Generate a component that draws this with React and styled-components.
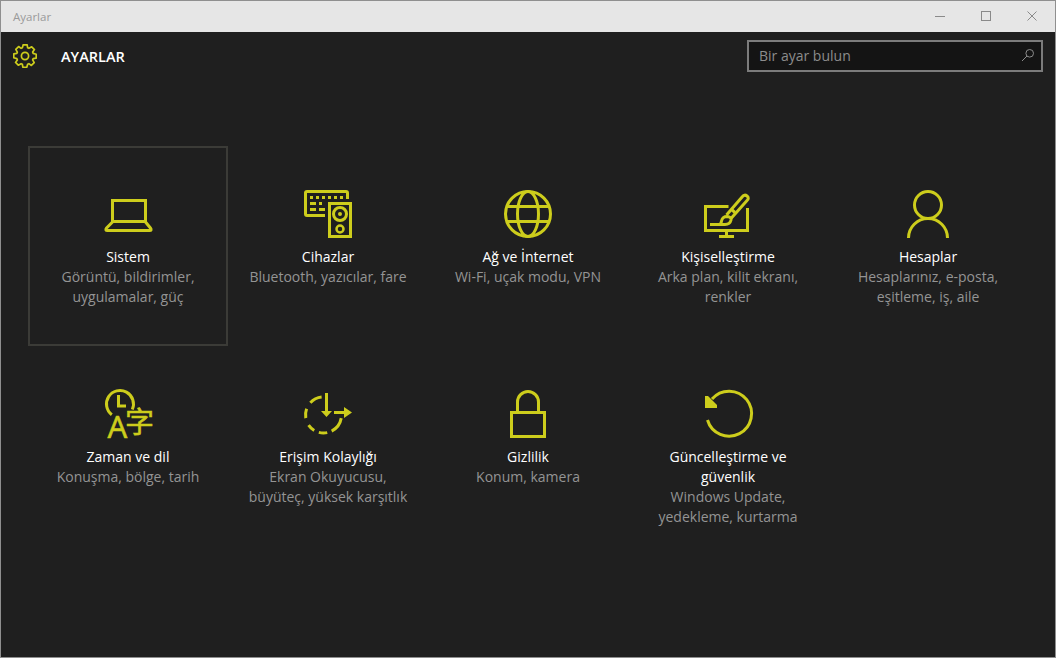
import React from 'react';
import styled, { createGlobalStyle } from 'styled-components';

const ACCENT = '#cdcd1c';
const FONT = '"Open Sans", "Noto Sans", sans-serif';

const GlobalStyle = createGlobalStyle`
  html, body {
    margin: 0;
    padding: 0;
    background: #1f1f1f;
  }
  * {
    box-sizing: border-box;
  }
`;

const Window = styled.div`
  width: 1056px;
  height: 658px;
  border: 1px solid #8f8f8f;
  background: #1f1f1f;
  font-family: ${FONT};
  overflow: hidden;
`;

const TitleBar = styled.div`
  height: 31px;
  background: #e6e6e6;
  display: flex;
  align-items: center;
  justify-content: space-between;
  padding-left: 12px;
`;

const TitleText = styled.span`
  font-size: 11.5px;
  color: #9a9a9a;
`;

const WindowButtons = styled.div`
  display: flex;
`;

const WindowButton = styled.div`
  width: 46px;
  height: 31px;
  display: flex;
  align-items: center;
  justify-content: center;
  padding-bottom: 1px;
`;

const Header = styled.header`
  height: 48px;
  display: flex;
  align-items: center;
  padding: 0 12px 0 12px;
`;

const HeaderTitle = styled.h1`
  margin: 0 auto 0 24px;
  font-size: 14.5px;
  font-weight: 600;
  color: #fff;
`;

const SearchBox = styled.div`
  width: 296px;
  height: 32px;
  border: 2px solid #7c7c7c;
  background: #141414;
  display: flex;
  align-items: center;
  justify-content: space-between;
  padding: 0 6px 2px 10px;
`;

const SearchText = styled.span`
  font-size: 14px;
  color: #8c8c8c;
`;

const Grid = styled.main`
  display: grid;
  grid-template-columns: repeat(5, 200px);
  grid-auto-rows: 200px;
  padding: 66px 0 0 27px;
`;

const Tile = styled.div`
  border: 2px solid ${(props) => (props.$selected ? '#3b3b37' : 'transparent')};
  padding: 42px 8px 0;
  display: flex;
  flex-direction: column;
  align-items: center;
  text-align: center;
`;

const IconBox = styled.svg`
  width: 48px;
  height: 48px;
  margin-bottom: 9px;
  fill: none;
  stroke: ${ACCENT};
  stroke-width: 3;
  flex: none;
  overflow: visible;
`;

const TileName = styled.div`
  font-size: 14px;
  line-height: 20px;
  color: #fff;
`;

const TileDesc = styled.div`
  font-size: 14px;
  line-height: 20px;
  color: #949494;
`;

const Keys = styled.path`
  stroke: none;
  fill: ${ACCENT};
`;

const gearPath = () => {
  const teeth = 8;
  const points = [];
  for (let i = 0; i < teeth; i++) {
    const a = (i / teeth) * Math.PI * 2 - Math.PI / 2;
    const step = (Math.PI * 2) / teeth;
    [
      [-0.5, 8.6],
      [-0.3, 11.4],
      [0.14, 11.4],
      [0.3, 8.6],
    ].forEach(([off, r]) => {
      const t = a + off * step + 0.08;
      points.push(`${(12 + r * Math.cos(t)).toFixed(2)} ${(12 + r * Math.sin(t)).toFixed(2)}`);
    });
  }
  return `M${points.join('L')}Z`;
};

const arc = (from, to) => {
  const point = (deg) => {
    const t = (deg * Math.PI) / 180;
    return `${(19.5 + 18 * Math.cos(t)).toFixed(2)} ${(25 + 18 * Math.sin(t)).toFixed(2)}`;
  };
  return `M${point(from)}A18 18 0 0 ${to > from ? 1 : 0} ${point(to)}`;
};

const GearIcon = () => (
  <svg width="24" height="24" viewBox="0 0 24 24" fill="none" stroke={ACCENT} strokeWidth="1.7">
    <path d={gearPath()} strokeLinejoin="round" />
    <circle cx="12" cy="12" r="3.6" />
  </svg>
);

const LaptopIcon = () => (
  <IconBox viewBox="0 0 48 48">
    <rect x="8.5" y="10.5" width="33" height="21" />
    <path d="M8.5 32 L2.6 38 Q0.8 40.5 3.5 40.5 H45.5 Q48.2 40.5 46.4 38 L41.5 32" />
  </IconBox>
);

const DevicesIcon = () => (
  <IconBox viewBox="0 0 48 48">
    <path d="M21 25.5 H3 Q1.5 25.5 1.5 24 V3 Q1.5 1.5 3 1.5 H42 Q43.5 1.5 43.5 3 V9" />
    <Keys d="M6 6h3v3H6zM12 6h3v3h-3zM18 6h3v3h-3zM24 6h3v3h-3zM30 6h3v3h-3zM36 6h3v3h-3zM6 12h6v3H6zM15 12h3v3h-3zM6 18h6v3H6zM15 18h6v3h-6z" />
    <rect x="25.5" y="13.5" width="21" height="33" />
    <circle cx="36" cy="24" r="6.5" />
    <circle cx="36" cy="24" r="1" strokeWidth="2" />
    <circle cx="36" cy="39" r="3.5" strokeWidth="2.5" />
  </IconBox>
);

const GlobeIcon = () => (
  <IconBox viewBox="0 0 48 48">
    <circle cx="24" cy="24" r="22.5" />
    <ellipse cx="24" cy="24" rx="10.5" ry="22.5" />
    <path d="M3 16.5 H45 M3 31.5 H45" />
  </IconBox>
);

const BrushIcon = () => (
  <IconBox viewBox="0 0 48 48">
    <path d="M24.5 16.5 H1.5 V40.5 H43.5 V18 M22.5 40.5 V46 M15 46.5 H30" />
    <path d="M6 34.5 H15 Q17 34.5 17.5 31 Q18.5 26.5 23 26.5 Q27.5 27 27 30 Q26 34.5 21 34.5 H15" />
    <path d="M22.5 25 L38.5 6.5 Q40.5 4 43 6 Q45.5 8 43 10.5 L27 28.5" />
    <path d="M27.5 19.5 L31 22.5" />
  </IconBox>
);

const PersonIcon = () => (
  <IconBox viewBox="0 0 48 48">
    <circle cx="24" cy="15" r="13.5" />
    <path d="M4.5 48 A19.5 19.5 0 0 1 43.5 48" />
  </IconBox>
);

const GlyphText = styled.text`
  fill: ${ACCENT};
  stroke: ${ACCENT};
  stroke-width: 0.5;
  font-family: "Noto Sans", "Noto Sans CJK SC", sans-serif;
  font-size: ${(props) => props.$size}px;
`;

const TimeIcon = () => (
  <IconBox viewBox="0 0 48 48">
    <path d="M7.8 24.7 A13.5 13.5 0 1 1 28.3 19.5" />
    <path d="M14.5 5 V16 H22" />
    <GlyphText x="3.5" y="48" $size="31">A</GlyphText>
    <GlyphText x="21" y="43" $size="29">字</GlyphText>
  </IconBox>
);

const AccessIcon = () => (
  <IconBox viewBox="0 0 48 48">
    <path d={[arc(-96, -137), arc(-160, -190), arc(146, 121), arc(105, 78), arc(63, 10)].join('')} />
    <path d="M22.5 3 V22 M30 22.5 H42" />
    <Keys d="M17 21 H28 L22.5 27 Z M40 17 L48 22.5 L40 28 Z" />
  </IconBox>
);

const LockIcon = () => (
  <IconBox viewBox="0 0 48 48">
    <rect x="7.5" y="22.5" width="33" height="24" />
    <path d="M13.5 21 V12 A10.5 10.5 0 0 1 34.5 12 V21" />
  </IconBox>
);

const UpdateIcon = () => (
  <IconBox viewBox="0 0 48 48">
    <path d="M3.5 30 A22.5 22.5 0 1 0 8 9" />
    <Keys d="M1 6 L4 6 L13 15 V18 H1 Z" />
  </IconBox>
);

const SearchIcon = () => (
  <svg width="14" height="14" viewBox="0 0 14 14" fill="none" stroke="#8c8c8c" strokeWidth="1">
    <circle cx="8.7" cy="5.3" r="3.8" />
    <path d="M6 8 L1 13" />
  </svg>
);

const TILES = [
  { name: 'Sistem', desc: ['Görüntü, bildirimler,', 'uygulamalar, güç'], Icon: LaptopIcon, selected: true },
  { name: 'Cihazlar', desc: ['Bluetooth, yazıcılar, fare'], Icon: DevicesIcon },
  { name: 'Ağ ve İnternet', desc: ['Wi-Fi, uçak modu, VPN'], Icon: GlobeIcon },
  { name: 'Kişiselleştirme', desc: ['Arka plan, kilit ekranı,', 'renkler'], Icon: BrushIcon },
  { name: 'Hesaplar', desc: ['Hesaplarınız, e-posta,', 'eşitleme, iş, aile'], Icon: PersonIcon },
  { name: 'Zaman ve dil', desc: ['Konuşma, bölge, tarih'], Icon: TimeIcon },
  { name: 'Erişim Kolaylığı', desc: ['Ekran Okuyucusu,', 'büyüteç, yüksek karşıtlık'], Icon: AccessIcon },
  { name: 'Gizlilik', desc: ['Konum, kamera'], Icon: LockIcon },
  { name: ['Güncelleştirme ve', 'güvenlik'], desc: ['Windows Update,', 'yedekleme, kurtarma'], Icon: UpdateIcon },
];

const App = () => (
  <Window>
    <GlobalStyle />
    <TitleBar>
      <TitleText>Ayarlar</TitleText>
      <WindowButtons>
        <WindowButton>
          <svg width="12" height="12" viewBox="0 0 12 12" stroke="#8a8a8a" fill="none">
            <path d="M1 6.5 H11" />
          </svg>
        </WindowButton>
        <WindowButton>
          <svg width="12" height="12" viewBox="0 0 12 12" stroke="#8a8a8a" fill="none">
            <rect x="1.5" y="1.5" width="9" height="9" />
          </svg>
        </WindowButton>
        <WindowButton>
          <svg width="12" height="12" viewBox="0 0 12 12" stroke="#8a8a8a" fill="none">
            <path d="M1.5 1.5 L10.5 10.5 M10.5 1.5 L1.5 10.5" />
          </svg>
        </WindowButton>
      </WindowButtons>
    </TitleBar>
    <Header>
      <GearIcon />
      <HeaderTitle>AYARLAR</HeaderTitle>
      <SearchBox>
        <SearchText>Bir ayar bulun</SearchText>
        <SearchIcon />
      </SearchBox>
    </Header>
    <Grid>
      {TILES.map(({ name, desc, Icon, selected }) => (
        <Tile key={desc[0]} $selected={selected}>
          <Icon />
          {[].concat(name).map((line) => (
            <TileName key={line}>{line}</TileName>
          ))}
          {desc.map((line) => (
            <TileDesc key={line}>{line}</TileDesc>
          ))}
        </Tile>
      ))}
    </Grid>
  </Window>
);

export default App;
